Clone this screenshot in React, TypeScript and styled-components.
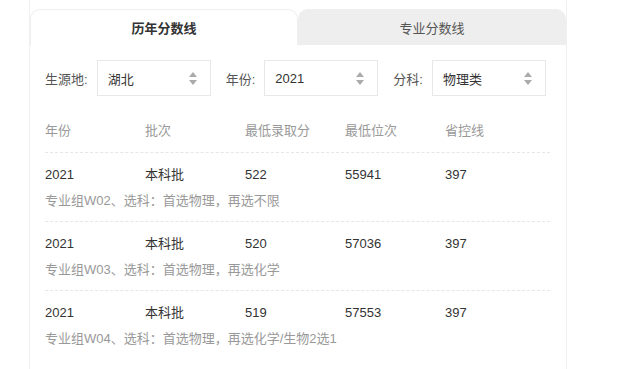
import React from "react";
import styled, { createGlobalStyle } from "styled-components";

const Global = createGlobalStyle`
  html, body { margin: 0; padding: 0; background: #fff; }
  body { font-family: "Liberation Sans", "Noto Sans CJK SC", Arial, sans-serif; font-size: 13px; color: #333; }
`;

const Page = styled.div`
  display: flex;
  padding-left: 29px;
  height: 369px;
  overflow: hidden;
`;

const Panel = styled.div`
  width: 536px;
  border-left: 1px solid #f0f0f0;
  border-right: 1px solid #f0f0f0;
  padding-top: 9px;
  display: flex;
  flex-direction: column;
`;

const Tabs = styled.div`
  display: flex;
  height: 36px;
`;

const Tab = styled.div<{ $active?: boolean }>`
  flex: 1;
  display: flex;
  align-items: center;
  justify-content: center;
  border-radius: 10px 10px 0 0;
  box-sizing: border-box;
  background: ${(p) => (p.$active ? "#fff" : "#eeeeee")};
  border: 1px solid ${(p) => (p.$active ? "#efefef" : "#eeeeee")};
  border-bottom: none;
  font-weight: ${(p) => (p.$active ? 700 : 400)};
  color: ${(p) => (p.$active ? "#333" : "#555")};
  font-size: 13px;
`;

const Content = styled.div`
  padding: 15px 15px 0 15px;
`;

const Filters = styled.div`
  display: flex;
  align-items: center;
`;

const FilterGroup = styled.div`
  display: flex;
  align-items: center;
  flex-shrink: 0;
  margin-right: 15px;
`;

const Label = styled.span`
  color: #555;
  margin-right: 9px;
  font-size: 13px;
  white-space: nowrap;
`;

const Select = styled.div`
  width: 114px;
  height: 36px;
  flex-shrink: 0;
  box-sizing: border-box;
  border: 1px solid #e8e8e8;
  display: flex;
  align-items: center;
  justify-content: space-between;
  padding: 0 13px 0 10px;
  color: #333;
`;

const Arrows = styled.div`
  display: flex;
  flex-direction: column;
  gap: 3px;
`;

const Tri = styled.span<{ $down?: boolean }>`
  width: 0;
  height: 0;
  border-left: 4.5px solid transparent;
  border-right: 4.5px solid transparent;
  ${(p) =>
    p.$down
      ? "border-top: 5px solid #aaa;"
      : "border-bottom: 5px solid #aaa;"}
`;

const Table = styled.div`
  width: 505px;
  margin-top: 25px;
`;

const Grid = styled.div`
  display: grid;
  grid-template-columns: repeat(5, 100px);
  line-height: 20px;
`;

const HeadRow = styled(Grid)`
  color: #999;
  padding-bottom: 11px;
  border-bottom: 1px dashed #e6e6e6;
`;

const Row = styled.div`
  padding: 12px 0 10px;
  & + & {
    border-top: 1px dashed #e6e6e6;
  }
`;

const Values = styled(Grid)`
  color: #333;
`;

const Sub = styled.div`
  margin-top: 6px;
  line-height: 20px;
  color: #999;
`;

const rows = [
  { score: "522", rank: "55941", sub: "专业组W02、选科：首选物理，再选不限" },
  { score: "520", rank: "57036", sub: "专业组W03、选科：首选物理，再选化学" },
  { score: "519", rank: "57553", sub: "专业组W04、选科：首选物理，再选化学/生物2选1" },
];

const SelectBox = ({ value }: { value: string }) => (
  <Select>
    <span>{value}</span>
    <Arrows>
      <Tri />
      <Tri $down />
    </Arrows>
  </Select>
);

export default function App() {
  return (
    <>
      <Global />
      <Page>
        <Panel>
          <Tabs>
            <Tab $active>历年分数线</Tab>
            <Tab>专业分数线</Tab>
          </Tabs>
          <Content>
            <Filters>
              <FilterGroup>
                <Label>生源地:</Label>
                <SelectBox value="湖北" />
              </FilterGroup>
              <FilterGroup>
                <Label>年份:</Label>
                <SelectBox value="2021" />
              </FilterGroup>
              <FilterGroup>
                <Label>分科:</Label>
                <SelectBox value="物理类" />
              </FilterGroup>
            </Filters>
            <Table>
              <HeadRow>
                <span>年份</span>
                <span>批次</span>
                <span>最低录取分</span>
                <span>最低位次</span>
                <span>省控线</span>
              </HeadRow>
              {rows.map((r) => (
                <Row key={r.rank}>
                  <Values>
                    <span>2021</span>
                    <span>本科批</span>
                    <span>{r.score}</span>
                    <span>{r.rank}</span>
                    <span>397</span>
                  </Values>
                  <Sub>{r.sub}</Sub>
                </Row>
              ))}
            </Table>
          </Content>
        </Panel>
      </Page>
    </>
  );
}
